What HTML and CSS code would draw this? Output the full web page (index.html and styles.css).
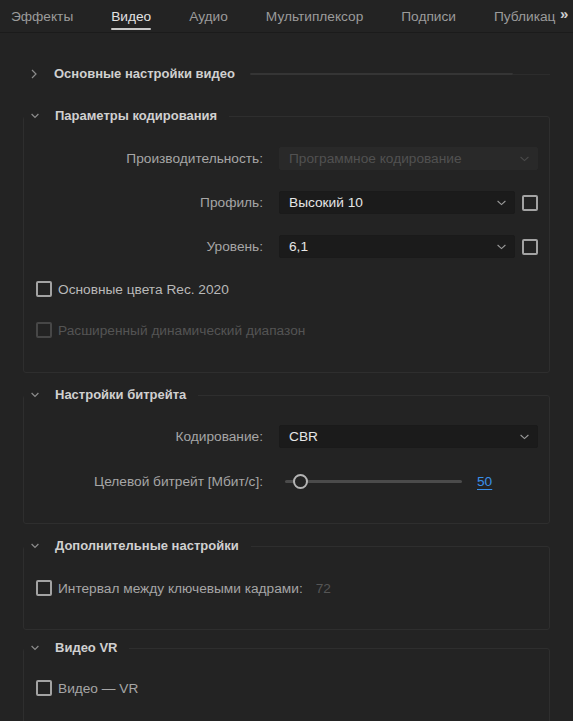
FILE: index.html
```html
<!DOCTYPE html>
<html lang="ru">
<head>
<meta charset="utf-8">
<link rel="stylesheet" href="styles.css">
</head>
<body>
<div class="tabbar">
  <div class="tablist">
    <span class="tab">Эффекты</span>
    <span class="tab active">Видео</span>
    <span class="tab">Аудио</span>
    <span class="tab">Мультиплексор</span>
    <span class="tab">Подписи</span>
    <span class="tab">Публикации</span>
  </div>
  <span class="more">»</span>
</div>

<div class="content">
  <div class="collapsed-head">
    <svg class="chev-right" width="6" height="10" viewBox="0 0 6 10"><polyline points="1,1 5,5 1,9" fill="none" stroke="#8c8c8c" stroke-width="1.2"/></svg>
    <span class="title">Основные настройки видео</span>
    <span class="line-light"></span>
    <span class="line-dark"></span>
  </div>

  <fieldset class="group group-first">
    <legend class="legend">
      <svg class="chev-down" width="8" height="6" viewBox="0 0 8 6"><polyline points="0.6,1 4,4.4 7.4,1" fill="none" stroke="#8c8c8c" stroke-width="1.2"/></svg>
      <span class="title">Параметры кодирования</span>
    </legend>
    <div class="form">
      <span class="label">Производительность:</span>
      <div class="select disabled">
        <span>Программное кодирование</span>
        <svg width="9" height="6" viewBox="0 0 9 6"><polyline points="0.6,1 4.5,4.6 8.4,1" fill="none" stroke="#4a4a4a" stroke-width="1.1"/></svg>
      </div>
      <span class="label">Профиль:</span>
      <div class="control-pair">
        <div class="select">
          <span>Высокий 10</span>
          <svg width="9" height="6" viewBox="0 0 9 6"><polyline points="0.6,1 4.5,4.6 8.4,1" fill="none" stroke="#9a9a9a" stroke-width="1.1"/></svg>
        </div>
        <span class="checkbox"></span>
      </div>
      <span class="label">Уровень:</span>
      <div class="control-pair">
        <div class="select">
          <span>6,1</span>
          <svg width="9" height="6" viewBox="0 0 9 6"><polyline points="0.6,1 4.5,4.6 8.4,1" fill="none" stroke="#9a9a9a" stroke-width="1.1"/></svg>
        </div>
        <span class="checkbox"></span>
      </div>
    </div>
    <div class="checks checks-after-form">
      <div class="check-row"><span class="checkbox"></span><span class="check-text">Основные цвета Rec. 2020</span></div>
      <div class="check-row disabled"><span class="checkbox"></span><span class="check-text">Расширенный динамический диапазон</span></div>
    </div>
  </fieldset>

  <fieldset class="group">
    <legend class="legend">
      <svg class="chev-down" width="8" height="6" viewBox="0 0 8 6"><polyline points="0.6,1 4,4.4 7.4,1" fill="none" stroke="#8c8c8c" stroke-width="1.2"/></svg>
      <span class="title">Настройки битрейта</span>
    </legend>
    <div class="form form-bitrate">
      <span class="label">Кодирование:</span>
      <div class="select">
        <span>CBR</span>
        <svg width="9" height="6" viewBox="0 0 9 6"><polyline points="0.6,1 4.5,4.6 8.4,1" fill="none" stroke="#9a9a9a" stroke-width="1.1"/></svg>
      </div>
      <span class="label">Целевой битрейт [Мбит/с]:</span>
      <div class="slider-row">
        <div class="track"><span class="thumb"></span></div>
        <span class="value">50</span>
      </div>
    </div>
  </fieldset>

  <fieldset class="group group-extra">
    <legend class="legend">
      <svg class="chev-down" width="8" height="6" viewBox="0 0 8 6"><polyline points="0.6,1 4,4.4 7.4,1" fill="none" stroke="#8c8c8c" stroke-width="1.2"/></svg>
      <span class="title">Дополнительные настройки</span>
    </legend>
    <div class="checks">
      <div class="check-row"><span class="checkbox"></span><span class="check-text muted">Интервал между ключевыми кадрами:</span><span class="num-disabled">72</span></div>
    </div>
  </fieldset>

  <fieldset class="group group-last">
    <legend class="legend">
      <svg class="chev-down" width="8" height="6" viewBox="0 0 8 6"><polyline points="0.6,1 4,4.4 7.4,1" fill="none" stroke="#8c8c8c" stroke-width="1.2"/></svg>
      <span class="title">Видео VR</span>
    </legend>
    <div class="checks checks-vr">
      <div class="check-row"><span class="checkbox"></span><span class="check-text muted">Видео — VR</span></div>
    </div>
  </fieldset>
</div>
</body>
</html>
```
FILE: styles.css
```css
* { box-sizing: border-box; }
html, body {
  margin: 0;
  padding: 0;
  background: #232323;
  height: 100%;
  overflow: hidden;
}
body {
  font-family: "Liberation Sans", Arial, sans-serif;
  font-size: 13.7px;
  color: #a6a6a6;
}

/* tabs */
.tabbar {
  display: flex;
  height: 33px;
  border-bottom: 1px solid #1b1b1b;
}
.tablist {
  flex: 1;
  min-width: 0;
  display: flex;
  gap: 38px;
  padding-left: 11px;
  margin-right: 4px;
  overflow: hidden;
  white-space: nowrap;
}
.tab {
  display: flex;
  flex-direction: column;
  padding-top: 9px;
  line-height: 16px;
  color: #9b9b9b;
  flex-shrink: 0;
}
.tab::after {
  content: "";
  display: block;
  height: 2px;
  margin-top: 3px;
  border-radius: 1px;
  background: transparent;
}
.tab.active { color: #e2e2e2; }
.tab.active::after { background: #c9c9c9; }
.more {
  width: 13px;
  padding-top: 6px;
  line-height: 16px;
  font-size: 15px;
  font-weight: bold;
  color: #d0d0d0;
}

/* content */
.content {
  padding: 0 23px 0 23px;
}
.title {
  font-size: 13px;
  font-weight: bold;
  color: #d0d0d0;
  line-height: 16px;
  white-space: nowrap;
}
.collapsed-head {
  display: flex;
  align-items: center;
  height: 16px;
  margin-top: 33px;
  padding-left: 8px;
}
.chev-right { margin-right: 17px; flex-shrink: 0; }
.line-light {
  flex: 1;
  height: 2px;
  margin-left: 15px;
  background: #353535;
  border-radius: 1px;
}
.line-dark {
  width: 37px;
  height: 1px;
  background: #2c2c2c;
}

.group {
  margin: 14px 0 0 0;
  padding: 22px 11px 30px 0;
  border: 1px solid #2e2e2e;
  border-radius: 3px;
  min-width: 0;
}
.group-first { margin-top: 26px; padding-top: 23px; padding-bottom: 30px; }
.group-extra { padding-bottom: 29px; }
.group-last { margin-top: 10px; padding-bottom: 60px; }
.legend {
  display: flex;
  align-items: center;
  padding: 0 12px 0 7px;
  height: 16px;
}
.chev-down { margin-right: 16px; flex-shrink: 0; }

.form {
  display: grid;
  grid-template-columns: 239px 1fr;
  column-gap: 16px;
  row-gap: 21px;
  align-items: center;
}
.form-bitrate { row-gap: 22px; }
.label {
  text-align: right;
  white-space: nowrap;
}
.select {
  display: flex;
  align-items: center;
  justify-content: space-between;
  height: 23px;
  padding: 0 8px 0 9px;
  background: #1b1b1b;
  border: 1px solid #1a1a1a;
  border-radius: 2px;
  color: #e6e6e6;
}
.select.disabled {
  background: #292929;
  border-color: #292929;
  color: #515151;
}
.control-pair {
  display: flex;
  align-items: center;
  gap: 7px;
}
.control-pair .select { flex: 1; }

.checkbox {
  display: inline-block;
  width: 16px;
  height: 16px;
  border: 2px solid #a3a3a3;
  border-radius: 2px;
  flex-shrink: 0;
}
.checks {
  display: flex;
  flex-direction: column;
  gap: 17px;
}
.checks-after-form { margin-top: 19px; }
.checks-vr { margin-top: -2px; }
.check-row {
  display: flex;
  align-items: center;
  height: 24px;
  padding-left: 12px;
}
.check-text {
  margin-left: 6px;
  color: #b9b9b9;
  white-space: nowrap;
}
.check-text.muted { color: #a6a6a6; }
.check-row.disabled .checkbox { border-color: #474747; }
.check-row.disabled .check-text { color: #545454; }
.num-disabled {
  margin-left: 13px;
  color: #555555;
}

/* slider */
.slider-row {
  display: flex;
  align-items: center;
  height: 23px;
}
.track {
  position: relative;
  width: 177px;
  height: 3px;
  margin-left: 6px;
  background: #4b4b4b;
  border-radius: 2px;
}
.thumb {
  position: absolute;
  left: 8px;
  top: -6px;
  width: 15px;
  height: 15px;
  border: 2.5px solid #b4b4b4;
  border-radius: 50%;
  background: #232323;
}
.value {
  margin-left: 15px;
  color: #3a8fe8;
  text-decoration: underline;
  text-underline-offset: 3px;
}
```
